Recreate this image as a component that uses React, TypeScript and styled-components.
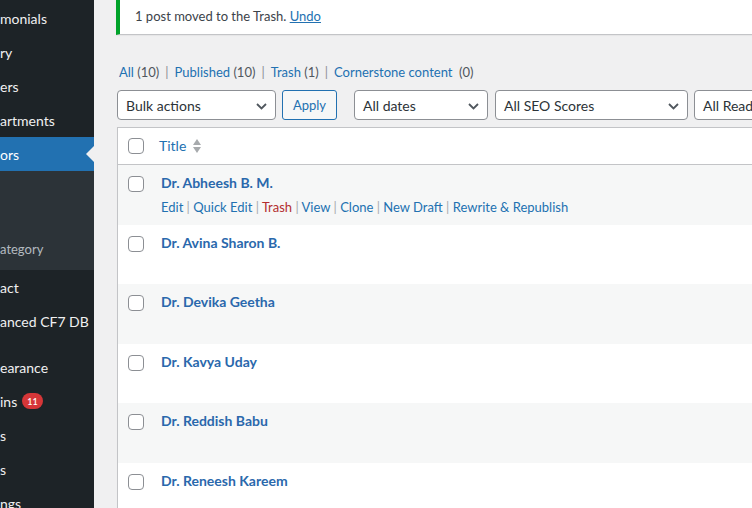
import React from "react";
import styled, { createGlobalStyle, css } from "styled-components";

const GlobalStyle = createGlobalStyle`
  html, body {
    margin: 0;
    padding: 0;
    background: #f0f0f1;
    font-family: Lato, "Liberation Sans", sans-serif;
    color: #3c434a;
  }
  * { box-sizing: border-box; }
`;

const Page = styled.div`
  display: flex;
  width: 752px;
  height: 508px;
  overflow: hidden;
`;

const Sidebar = styled.nav`
  width: 94px;
  flex-shrink: 0;
  background: #1d2327;
  padding-top: 1px;
  overflow: hidden;
`;

const MenuItem = styled.div<{ $active?: boolean }>`
  position: relative;
  height: 34px;
  display: flex;
  align-items: center;
  color: #f0f0f1;
  font-size: 14px;
  white-space: nowrap;
  ${(p) =>
    p.$active &&
    css`
      background: #2271b1;
      color: #fff;
      &::after {
        content: "";
        position: absolute;
        right: 0;
        top: 50%;
        margin-top: -8px;
        border: 8px solid transparent;
        border-right-color: #f0f0f1;
        border-left-width: 0;
      }
    `}
`;

const Submenu = styled.div`
  background: #2c3338;
  padding: 7px 0 8px;
`;

const SubItem = styled.div`
  height: 28px;
  display: flex;
  align-items: center;
  font-size: 13px;
  color: rgba(240, 246, 252, 0.7);
  white-space: nowrap;
  padding-top: 1px;
`;

const Separator = styled.div`
  height: 12px;
`;

const Badge = styled.span`
  display: inline-flex;
  align-items: center;
  justify-content: center;
  height: 16px;
  min-width: 20px;
  padding: 0 5px;
  margin-left: 5px;
  border-radius: 9px;
  background: #d63638;
  color: #fff;
  font-size: 9px;
  font-weight: 600;
`;

const Main = styled.main`
  flex: 1;
  min-width: 0;
  overflow: hidden;
  padding-left: 22px;
`;

const Wrap = styled.div`
  width: 900px;
`;

const Notice = styled.div`
  background: #fff;
  border-left: 4px solid #00a32a;
  border-bottom: 1px solid #c3c4c7;
  box-shadow: 0 1px 1px rgba(0, 0, 0, 0.04);
  padding: 6px 12px 8px 15px;
  font-size: 13px;
  line-height: 20px;
  color: #3c434a;
  a {
    color: #2271b1;
    text-decoration: underline;
  }
`;

const SubSub = styled.ul`
  list-style: none;
  margin: 27px 0 8px 3px;
  padding: 0;
  display: flex;
  font-size: 13px;
  line-height: 20px;
  color: #646970;
  li {
    white-space: pre;
  }
  a {
    color: #2271b1;
    text-decoration: none;
  }
`;

const Count = styled.span`
  color: #50575e;
`;

const Pipe = styled.span`
  color: #8c8f94;
  margin: 0 6px;
`;

const Filters = styled.div`
  display: flex;
  align-items: center;
  margin-left: 1px;
  height: 30px;
`;

const Select = styled.div<{ $w: number; $gap: number }>`
  position: relative;
  display: flex;
  align-items: center;
  flex-shrink: 0;
  width: ${(p) => p.$w}px;
  height: 30px;
  margin-right: ${(p) => p.$gap}px;
  padding: 0 24px 0 8px;
  border: 1px solid #8c8f94;
  border-radius: 4px;
  background: #fff;
  font-size: 14px;
  color: #2c3338;
  white-space: nowrap;
  overflow: hidden;
  svg {
    position: absolute;
    right: 8px;
    top: 12px;
  }
`;

const ApplyButton = styled.button`
  flex-shrink: 0;
  width: 55px;
  height: 30px;
  margin-right: 17px;
  border: 1px solid #2271b1;
  border-radius: 3px;
  background: #f6f7f7;
  color: #2271b1;
  font-family: inherit;
  font-size: 13px;
  padding: 0;
`;

const Table = styled.div`
  margin: 7px 0 0 1px;
  background: #fff;
  border: 1px solid #c3c4c7;
  box-shadow: 0 1px 1px rgba(0, 0, 0, 0.04);
`;

const HeadRow = styled.div`
  display: flex;
  align-items: flex-start;
  height: 37px;
  border-bottom: 1px solid #c3c4c7;
  padding: 10px 0 0 10px;
`;

const Row = styled.div<{ $alt?: boolean }>`
  display: flex;
  align-items: flex-start;
  height: 59.6px;
  padding: 11px 0 0 10px;
  background: ${(p) => (p.$alt ? "#f6f7f7" : "#fff")};
`;

const Check = styled.span`
  display: block;
  flex-shrink: 0;
  width: 16px;
  height: 16px;
  border: 1px solid #8c8f94;
  border-radius: 4px;
  background: #fff;
`;

const HeadTitle = styled.a`
  display: flex;
  align-items: center;
  margin-left: 15px;
  margin-top: -2px;
  font-size: 14px;
  line-height: 20px;
  color: #2271b1;
  text-decoration: none;
  svg {
    margin-left: 6px;
  }
`;

const TitleCell = styled.div`
  margin-left: 17px;
  margin-top: -3px;
`;

const PostTitle = styled.a`
  display: block;
  font-size: 14px;
  font-weight: 700;
  line-height: 20px;
  color: #2a68ac;
  text-decoration: none;
`;

const RowActions = styled.div`
  margin-top: 4px;
  font-size: 13px;
  line-height: 20px;
  color: #a7aaad;
  white-space: pre;
`;

const Action = styled.a<{ $danger?: boolean }>`
  color: ${(p) => (p.$danger ? "#b32d2e" : "#2271b1")};
  text-decoration: none;
`;

const Chevron = () => (
  <svg width="11" height="7" viewBox="0 0 11 7">
    <path d="M1 1l4.5 4.5L10 1" fill="none" stroke="#50575e" strokeWidth="1.8" />
  </svg>
);

const SortIcon = () => (
  <svg width="10" height="16" viewBox="0 0 10 16">
    <path d="M5 1l4 6H1z" fill="#a7aaad" />
    <path d="M5 15l4-6H1z" fill="#a7aaad" />
  </svg>
);

const doctors = [
  "Dr. Abheesh B. M.",
  "Dr. Avina Sharon B.",
  "Dr. Devika Geetha",
  "Dr. Kavya Uday",
  "Dr. Reddish Babu",
  "Dr. Reneesh Kareem",
];

const actions = ["Edit", "Quick Edit", "Trash", "View", "Clone", "New Draft", "Rewrite & Republish"];

const App = () => {
  return (
    <Page>
      <GlobalStyle />
      <Sidebar>
        <MenuItem>monials</MenuItem>
        <MenuItem>ry</MenuItem>
        <MenuItem>ers</MenuItem>
        <MenuItem>artments</MenuItem>
        <MenuItem $active>ors</MenuItem>
        <Submenu>
          <SubItem />
          <SubItem />
          <SubItem>ategory</SubItem>
        </Submenu>
        <MenuItem>act</MenuItem>
        <MenuItem>anced CF7 DB</MenuItem>
        <Separator />
        <MenuItem>earance</MenuItem>
        <MenuItem>
          ins<Badge>11</Badge>
        </MenuItem>
        <MenuItem>s</MenuItem>
        <MenuItem>s</MenuItem>
        <MenuItem>ngs</MenuItem>
      </Sidebar>
      <Main>
        <Wrap>
          <Notice>
            1 post moved to the Trash. <a href="#">Undo</a>
          </Notice>
          <SubSub>
            <li>
              <a href="#">All <Count>(10)</Count></a>
              <Pipe>|</Pipe>
            </li>
            <li>
              <a href="#">Published <Count>(10)</Count></a>
              <Pipe>|</Pipe>
            </li>
            <li>
              <a href="#">Trash <Count>(1)</Count></a>
              <Pipe>|</Pipe>
            </li>
            <li>
              <a href="#">Cornerstone content </a> <Count>(0)</Count>
            </li>
          </SubSub>
          <Filters>
            <Select $w={159} $gap={6}>
              Bulk actions
              <Chevron />
            </Select>
            <ApplyButton>Apply</ApplyButton>
            <Select $w={134} $gap={7}>
              All dates
              <Chevron />
            </Select>
            <Select $w={193} $gap={6}>
              All SEO Scores
              <Chevron />
            </Select>
            <Select $w={190} $gap={6}>
              All Readability Scores
              <Chevron />
            </Select>
          </Filters>
          <Table>
            <HeadRow>
              <Check />
              <HeadTitle href="#">
                Title
                <SortIcon />
              </HeadTitle>
            </HeadRow>
            {doctors.map((name, i) => (
              <Row key={name} $alt={i % 2 === 0}>
                <Check />
                <TitleCell>
                  <PostTitle href="#">{name}</PostTitle>
                  {i === 0 && (
                    <RowActions>
                      {actions.map((a, j) => (
                        <React.Fragment key={a}>
                          {j > 0 && " | "}
                          <Action href="#" $danger={a === "Trash"}>
                            {a}
                          </Action>
                        </React.Fragment>
                      ))}
                    </RowActions>
                  )}
                </TitleCell>
              </Row>
            ))}
          </Table>
        </Wrap>
      </Main>
    </Page>
  );
};

export default App;
